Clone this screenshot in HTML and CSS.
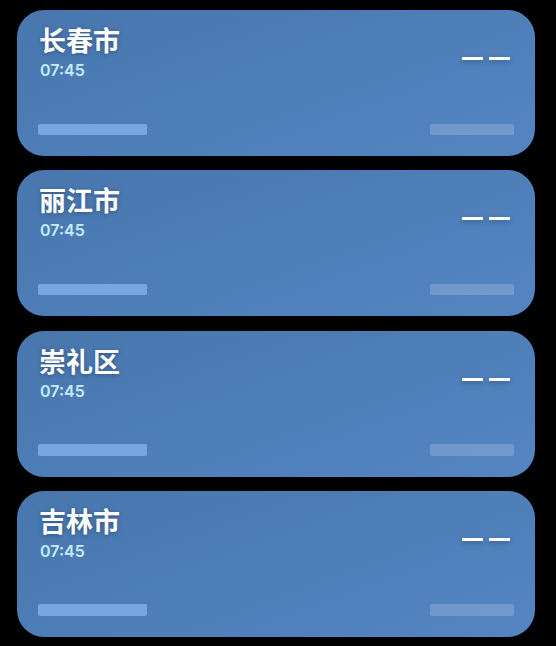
FILE: index.html
```html
<!DOCTYPE html>
<html lang="zh">
<head>
<meta charset="utf-8">
<link rel="stylesheet" href="styles.css">
</head>
<body>
<div class="list">
  <div class="card">
    <div class="top">
      <div class="info">
        <div class="city">长春市</div>
        <div class="time">07:45</div>
      </div>
      <div class="temp"><span class="dash"></span><span class="dash"></span></div>
    </div>
    <div class="bottom"><span class="bar-l"></span><span class="bar-r"></span></div>
  </div>
  <div class="card">
    <div class="top">
      <div class="info">
        <div class="city">丽江市</div>
        <div class="time">07:45</div>
      </div>
      <div class="temp"><span class="dash"></span><span class="dash"></span></div>
    </div>
    <div class="bottom"><span class="bar-l"></span><span class="bar-r"></span></div>
  </div>
  <div class="card">
    <div class="top">
      <div class="info">
        <div class="city">崇礼区</div>
        <div class="time">07:45</div>
      </div>
      <div class="temp"><span class="dash"></span><span class="dash"></span></div>
    </div>
    <div class="bottom"><span class="bar-l"></span><span class="bar-r"></span></div>
  </div>
  <div class="card">
    <div class="top">
      <div class="info">
        <div class="city">吉林市</div>
        <div class="time">07:45</div>
      </div>
      <div class="temp"><span class="dash"></span><span class="dash"></span></div>
    </div>
    <div class="bottom"><span class="bar-l"></span><span class="bar-r"></span></div>
  </div>
</div>
</body>
</html>
```
FILE: styles.css
```css
html, body {
  margin: 0;
  padding: 0;
  background: #000;
}
body {
  width: 556px;
  height: 646px;
  overflow: hidden;
  font-family: "Noto Sans CJK SC", "Noto Sans", sans-serif;
}
.list {
  display: flex;
  flex-direction: column;
  gap: 14.3px;
  padding: 10px 21px 0 17px;
}
.card {
  height: 146px;
  box-sizing: border-box;
  border-radius: 27px;
  background: linear-gradient(160deg, #4876ad 0%, #4f7fb9 55%, #5485c0 100%);
  padding: 14px 21px 21px 22px;
  display: flex;
  flex-direction: column;
}
.top {
  display: flex;
  justify-content: space-between;
  align-items: flex-start;
}
.city {
  color: #fff;
  font-size: 27px;
  font-weight: 700;
  line-height: 31px;
  text-shadow: 0 1px 4px rgba(20, 40, 80, 0.45);
}
.time {
  color: #c2ecff;
  font-family: "Inter", "Roboto", sans-serif;
  font-size: 16px;
  font-weight: 600;
  line-height: 16px;
  margin-top: 7px;
  margin-left: 1px;
}
.temp {
  display: flex;
  gap: 6px;
  margin-top: 33px;
  margin-right: 4px;
}
.dash {
  display: block;
  width: 21px;
  height: 3px;
  background: #fff;
  box-shadow: 0 2px 5px rgba(20, 40, 80, 0.4);
}
.bottom {
  margin-top: auto;
  display: flex;
  justify-content: space-between;
  margin-left: -1px;
}
.bar-l {
  display: block;
  width: 109px;
  height: 11.5px;
  border-radius: 2px;
  background: #79a6de;
}
.bar-r {
  display: block;
  width: 84px;
  height: 11.5px;
  border-radius: 2px;
  background: rgba(140, 170, 215, 0.55);
}
```
